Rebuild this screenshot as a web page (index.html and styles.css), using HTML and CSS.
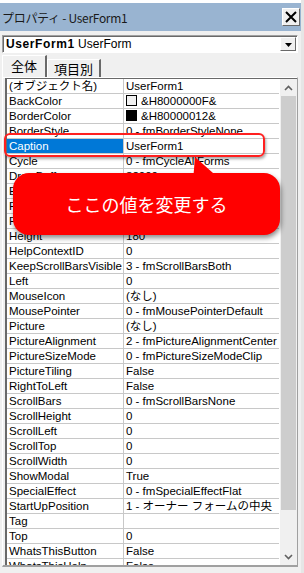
FILE: index.html
```html
<!DOCTYPE html>
<html lang="ja">
<head>
  <meta charset="UTF-8">
  <meta name="viewport" content="width=device-width, initial-scale=1.0">
  <title>プロパティ</title>
  <link rel="stylesheet" href="styles.css">
</head>
<body>
  <div class="window">
    <div class="top-strip"></div>
    <div class="titlebar">
      <span class="title">プロパティ - UserForm1</span>
      <span class="close">
        <svg width="14" height="14" viewBox="0 0 14 14"><path d="M2 2 L12 12 M12 2 L2 12" stroke="#000" stroke-width="2"/></svg>
      </span>
    </div>

    <div class="combo">
      <span class="combo-text"><b>UserForm1</b> UserForm</span>
      <span class="combo-btn">
        <svg width="7" height="4" viewBox="0 0 7 4"><path d="M0 0 H7 L3.5 4 Z" fill="#000"/></svg>
      </span>
    </div>

    <div class="tabs">
      <span class="tab active">全体</span>
      <span class="tab">項目別</span>
    </div>

    <div class="panel">
      <div class="grid">
        <table class="props">
          <tr><td>(オブジェクト名)</td><td>UserForm1</td></tr>
          <tr><td>BackColor</td><td><span class="swatch light"></span>&amp;H8000000F&amp;</td></tr>
          <tr><td>BorderColor</td><td><span class="swatch dark"></span>&amp;H80000012&amp;</td></tr>
          <tr><td>BorderStyle</td><td>0 - fmBorderStyleNone</td></tr>
          <tr class="selected"><td>Caption</td><td>UserForm1</td></tr>
          <tr><td>Cycle</td><td>0 - fmCycleAllForms</td></tr>
          <tr><td>DrawBuffer</td><td>32000</td></tr>
          <tr><td>Enabled</td><td>True</td></tr>
          <tr><td>Font</td><td>MS UI Gothic</td></tr>
          <tr><td>ForeColor</td><td><span class="swatch dark"></span>&amp;H80000012&amp;</td></tr>
          <tr><td>Height</td><td>180</td></tr>
          <tr><td>HelpContextID</td><td>0</td></tr>
          <tr><td>KeepScrollBarsVisible</td><td>3 - fmScrollBarsBoth</td></tr>
          <tr><td>Left</td><td>0</td></tr>
          <tr><td>MouseIcon</td><td>(なし)</td></tr>
          <tr><td>MousePointer</td><td>0 - fmMousePointerDefault</td></tr>
          <tr><td>Picture</td><td>(なし)</td></tr>
          <tr><td>PictureAlignment</td><td>2 - fmPictureAlignmentCenter</td></tr>
          <tr><td>PictureSizeMode</td><td>0 - fmPictureSizeModeClip</td></tr>
          <tr><td>PictureTiling</td><td>False</td></tr>
          <tr><td>RightToLeft</td><td>False</td></tr>
          <tr><td>ScrollBars</td><td>0 - fmScrollBarsNone</td></tr>
          <tr><td>ScrollHeight</td><td>0</td></tr>
          <tr><td>ScrollLeft</td><td>0</td></tr>
          <tr><td>ScrollTop</td><td>0</td></tr>
          <tr><td>ScrollWidth</td><td>0</td></tr>
          <tr><td>ShowModal</td><td>True</td></tr>
          <tr><td>SpecialEffect</td><td>0 - fmSpecialEffectFlat</td></tr>
          <tr><td>StartUpPosition</td><td>1 - オーナー フォームの中央</td></tr>
          <tr><td>Tag</td><td></td></tr>
          <tr><td>Top</td><td>0</td></tr>
          <tr><td>WhatsThisButton</td><td>False</td></tr>
          <tr><td>WhatsThisHelp</td><td>False</td></tr>
        </table>
      </div>
      <div class="scrollbar">
        <span class="arrow">
          <svg width="9" height="6" viewBox="0 0 9 6"><path d="M1 5 L4.5 1.5 L8 5" stroke="#606060" stroke-width="1.6" fill="none"/></svg>
        </span>
        <div class="track"><div class="thumb"></div></div>
        <span class="arrow">
          <svg width="9" height="6" viewBox="0 0 9 6"><path d="M1 1 L4.5 4.5 L8 1" stroke="#606060" stroke-width="1.6" fill="none"/></svg>
        </span>
      </div>
    </div>

    <!-- annotation overlay -->
    <div class="highlight"></div>
    <div class="callout">
      <svg class="callout-tail" width="32" height="24" viewBox="0 0 32 24"><path d="M4 0 L2 24 L31 24 Z" fill="#ff0000"/></svg>
      <span class="callout-text">ここの値を変更する</span>
    </div>
  </div>
</body>
</html>
```

FILE: styles.css
```css
body {
  margin: 0;
  padding: 0;
  background-color: #ffffff;
}
.window {
  width: 304px;
  height: 573px;
  box-sizing: border-box;
  background-color: #f0f0f0;
  border-right: 3px solid #e6e6e6;
  display: flex;
  flex-direction: column;
  position: relative;
  overflow: hidden;
  font-family: "Liberation Sans", "Noto Sans CJK JP", sans-serif;
  font-size: 11.5px;
  color: #000;
}
.top-strip {
  flex-shrink: 0;
  height: 3px;
  background-color: #ffffff;
}
.titlebar {
  flex-shrink: 0;
  height: 28px;
  background-color: #99b4d1;
  display: flex;
  align-items: center;
  justify-content: space-between;
  padding: 0 0 0 2px;
}
.title {
  font-family: "Noto Sans CJK JP", sans-serif;
  font-size: 12px;
  letter-spacing: -0.3px;
  color: #1a1a1a;
}
.close {
  width: 18px;
  height: 18px;
  box-sizing: border-box;
  background-color: #f0f0f0;
  border: 1px solid;
  border-color: #ffffff #696969 #696969 #ffffff;
  display: flex;
  align-items: center;
  justify-content: center;
  margin-right: 1px;
}
.combo {
  flex-shrink: 0;
  margin: 4px 3px 0 2px;
  height: 18px;
  box-sizing: border-box;
  background-color: #ffffff;
  border: 1px solid;
  border-color: #a0a0a0 #ffffff #ffffff #a0a0a0;
  box-shadow: inset 1px 1px 0 #696969;
  display: flex;
  align-items: center;
  justify-content: space-between;
  padding-left: 3px;
  font-size: 12px;
}
.combo-text b {
  letter-spacing: 0.6px;
}
.combo-btn {
  width: 16px;
  height: 14px;
  box-sizing: border-box;
  background-color: #f0f0f0;
  border: 1px solid;
  border-color: #ffffff #696969 #696969 #ffffff;
  display: flex;
  align-items: flex-end;
  justify-content: center;
  padding-bottom: 3px;
  margin-right: 1px;
}
.tabs {
  flex-shrink: 0;
  display: flex;
  align-items: flex-end;
  height: 22px;
  margin-top: 2px;
  padding-left: 2px;
}
.tab {
  font-family: "Noto Sans CJK JP", sans-serif;
  font-size: 13px;
  height: 18px;
  line-height: 17px;
  padding: 0 6px;
  box-sizing: border-box;
  border-left: 1px solid #ffffff;
  border-top: 1px solid #ffffff;
  border-right: 2px solid #696969;
}
.tab.active {
  height: 22px;
  line-height: 20px;
  padding: 0 8px;
}
.panel {
  flex: 1;
  min-height: 0;
  display: flex;
  margin: 0 3px 6px 2px;
  border-top: 1px solid #ffffff;
  border-left: 1px solid #ffffff;
  border-right: 1px solid #a0a0a0;
  border-bottom: 2px solid #a0a0a0;
  padding: 0 0 0 2px;
}
.grid {
  flex: 1;
  overflow: hidden;
  background-color: #ffffff;
  border-top: 1px solid #696969;
  border-left: 2px solid #696969;
}
.props {
  border-collapse: collapse;
  width: 272px;
  table-layout: fixed;
}
.props td {
  height: 14px;
  line-height: 14px;
  padding: 0 0 0 2px;
  border-bottom: 1px solid #c8c8c8;
  white-space: nowrap;
  overflow: hidden;
}
.props td:first-child {
  width: 114px;
  border-right: 1px solid #c8c8c8;
}
.props tr.selected td:first-child {
  background-color: #0078d7;
  color: #ffffff;
}
.swatch {
  display: inline-block;
  width: 9px;
  height: 9px;
  border: 1px solid #000;
  margin-right: 4px;
  vertical-align: -1px;
}
.swatch.light {
  background-color: #f0f0f0;
}
.swatch.dark {
  background-color: #000;
}
.scrollbar {
  width: 17px;
  display: flex;
  flex-direction: column;
  background-color: #f0f0f0;
  border-top: 1px solid #696969;
}
.arrow {
  height: 17px;
  display: flex;
  align-items: center;
  justify-content: center;
}
.track {
  flex: 1;
  padding: 0 1px;
}
.thumb {
  height: 414px;
  background-color: #cdcdcd;
}
.highlight {
  position: absolute;
  left: 4px;
  top: 133px;
  width: 261px;
  height: 24px;
  box-sizing: border-box;
  border: 2px solid #ff2020;
  border-radius: 6px;
  box-shadow: 1px 2px 3px rgba(0, 0, 0, 0.35);
}
.callout {
  position: absolute;
  left: 13px;
  top: 173px;
  width: 267px;
  height: 62px;
  background-color: #ff0000;
  border-radius: 16px;
  box-shadow: 1px 3px 5px rgba(0, 0, 0, 0.45);
  display: flex;
  align-items: center;
  justify-content: center;
}
.callout-tail {
  position: absolute;
  left: 178px;
  top: -16px;
}
.callout-text {
  font-family: "Noto Sans CJK JP", sans-serif;
  font-size: 18px;
  color: #ffffff;
  position: relative;
}
```
